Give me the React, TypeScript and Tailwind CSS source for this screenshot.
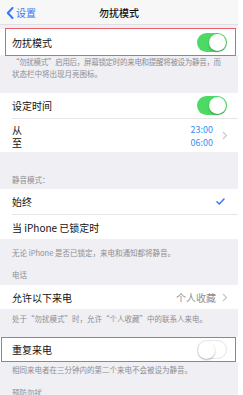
const font = { fontFamily: '"Noto Sans CJK SC", "Liberation Sans", sans-serif' };

function Toggle({ on }: { on: boolean }) {
  return (
    <div
      className={
        'relative w-[30px] h-[19px] rounded-full ' +
        (on ? 'bg-[#4cd964]' : 'bg-white border border-[#e5e5ea]')
      }
    >
      <div
        className={
          'absolute top-[1px] w-[17px] h-[17px] rounded-full bg-white shadow-[0_1px_2px_rgba(0,0,0,0.3)] ' +
          (on ? 'right-[1px]' : 'left-0 top-0')
        }
      />
    </div>
  );
}

function Note({ children }: { children: React.ReactNode }) {
  return (
    <div className="px-[12px] text-[7.5px] leading-[12px] text-[#8e8e93] whitespace-nowrap">{children}</div>
  );
}

function Chevron() {
  return (
    <svg width="6" height="9" viewBox="0 0 6 9">
      <path d="M1 1 L4.5 4.5 L1 8" fill="none" stroke="#c7c7cc" strokeWidth="1.2" />
    </svg>
  );
}

export default function App() {
  return (
    <div className="w-[243px] h-[395px] bg-white overflow-hidden" style={font}>
      <div className="w-[238px] h-[395px] bg-[#efeff4] overflow-hidden">
        {/* Nav */}
        <div className="relative h-[25px] bg-[#f7f7f7] border-b border-[#e0e0e4] flex items-center justify-center">
          <div className="absolute left-[6px] top-0 h-[25px] flex items-center text-[#3478f6] text-[10px]">
            <svg width="8" height="12" viewBox="0 0 8 12" className="mr-[2px]">
              <path d="M6.5 1 L1.8 6 L6.5 11" fill="none" stroke="#3478f6" strokeWidth="2" strokeLinecap="round" strokeLinejoin="round" />
            </svg>
            设置
          </div>
          <div className="text-[10px] font-medium text-[#111]">勿扰模式</div>
        </div>

        {/* DND row */}
        <div className="h-[4px]" />
        <div className="relative h-[26px] bg-white flex items-center justify-between pl-[12px] pr-[11px]">
          <span className="text-[10px] text-[#111]">勿扰模式</span>
          <Toggle on />
          <div className="absolute left-[5px] right-[2px] top-[-1px] bottom-[-1px] border-[1.5px] border-[#ea5f66]" />
        </div>
        <div className="pt-[1px] pb-[13px]">
          <Note>
            <span className="tracking-[-0.3px]">“勿扰模式”启用后，屏幕锁定时的来电和提醒将被设为静音，而</span>
            <br />
            状态栏中将出现月亮图标。
          </Note>
        </div>

        {/* Scheduled */}
        <div className="bg-white">
          <div className="h-[25px] flex items-center justify-between pl-[12px] pr-[11px]">
            <span className="text-[10px] text-[#111]">设定时间</span>
            <Toggle on />
          </div>
          <div className="ml-[12px] h-[34px] border-t border-[#e5e5ea] flex items-center pr-[10px]">
            <div className="flex-1 text-[10px] text-[#111]">
              <div className="leading-[13px]">从</div>
              <div className="leading-[13px]">至</div>
            </div>
            <div className="text-[9px] text-[#3b8ef5] text-right">
              <div className="leading-[13px]">23:00</div>
              <div className="leading-[13px]">06:00</div>
            </div>
            <div className="ml-[9px]">
              <Chevron />
            </div>
          </div>
        </div>

        <div className="h-[37px] flex items-end pb-[3px]">
          <Note>静音模式：</Note>
        </div>

        <div className="bg-white">
          <div className="h-[25px] flex items-center justify-between pl-[12px] pr-[13px]">
            <span className="text-[10px] text-[#111]">始终</span>
            <svg width="9" height="7" viewBox="0 0 9 7">
              <path d="M1 3.8 L3.3 6 L8 1" fill="none" stroke="#3478f6" strokeWidth="1.5" strokeLinecap="round" strokeLinejoin="round" />
            </svg>
          </div>
          <div className="ml-[12px] h-[25px] border-t border-[#e5e5ea] flex items-center">
            <span className="text-[10px] text-[#111]">当 iPhone 已锁定时</span>
          </div>
        </div>

        <div className="pt-[8px] pb-[4px]">
          <Note>无论 iPhone 是否已锁定，来电和通知都将静音。</Note>
          <div className="h-[10px]" />
          <Note>电话</Note>
        </div>

        <div className="bg-white h-[24px] flex items-center justify-between pl-[12px] pr-[10px]">
          <span className="text-[10px] text-[#111]">允许以下来电</span>
          <span className="flex items-center text-[10px] text-[#8e8e93]">
            个人收藏
            <span className="ml-[6px] flex">
              <Chevron />
            </span>
          </span>
        </div>
        <div className="pt-[4px] pb-[12px]">
          <Note>处于“勿扰模式”时，允许“个人收藏”中的联系人来电。</Note>
        </div>

        <div className="relative h-[25px] bg-white flex items-center justify-between pl-[12px] pr-[11px]">
          <span className="text-[10px] text-[#111]">重复来电</span>
          <Toggle on={false} />
          <div className="absolute left-[1px] right-[2px] top-[0px] bottom-[0px] border-[1.5px] border-[#ea5f66]" />
        </div>
        <div className="pt-[2px]">
          <Note>相同来电者在三分钟内的第二个来电不会被设为静音。</Note>
          <div className="h-[11px]" />
          <Note>预防勿扰</Note>
        </div>
      </div>
    </div>
  );
}
